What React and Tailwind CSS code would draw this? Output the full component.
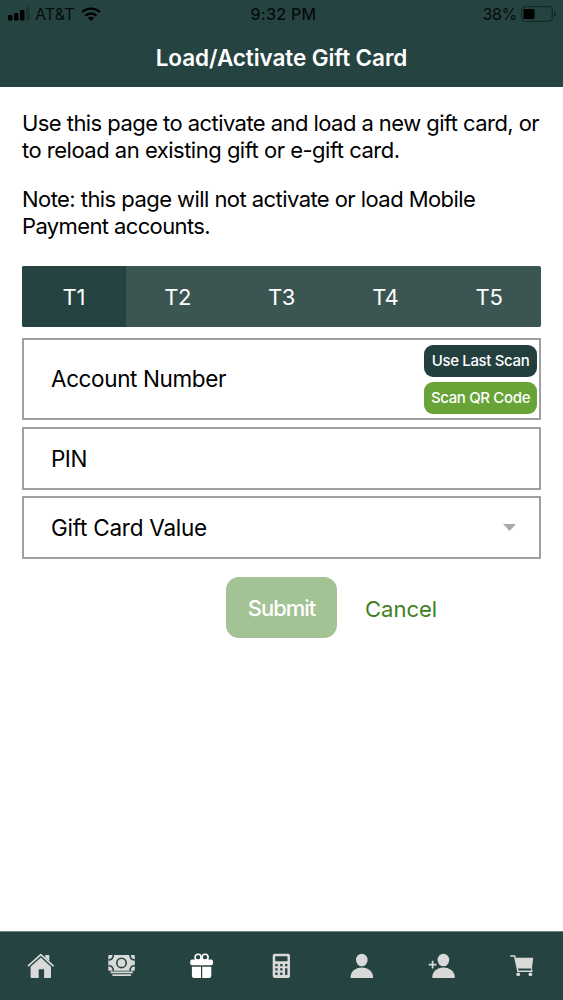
import React, { useState } from 'react';

function HomeIcon() {
  return (
    <svg viewBox="0 0 28 28" className="h-7 w-7" fill="currentColor">
      <path d="M2.5 13.6 14.8 2.6 27 13.6" fill="none" stroke="currentColor" strokeWidth="1.8" strokeLinecap="round" strokeLinejoin="round" />
      <path d="M19.3 2.9h4v6.2l-4-3.6z" />
      <path d="M14.8 5.6 25 14.7V25.2a.8.8 0 0 1-.8.8h-6.1v-8.8h-5.4V26H5.4a.8.8 0 0 1-.8-.8V14.7z" />
    </svg>
  );
}

function CashIcon() {
  return (
    <svg viewBox="0 0 28 28" className="h-7 w-7">
      <rect x="1.3" y="3" width="26.5" height="15.7" rx="1" fill="currentColor" />
      <g fill="none" stroke="#254441" strokeWidth="1.6">
        <circle cx="14.5" cy="10.9" r="4.7" />
        <path d="M1.5 7.8c3 .3 5-1.7 4.7-4.8M23.1 3c-.3 3.1 1.7 5.1 4.7 4.8M1.5 13.8c3-.3 5 1.7 4.7 4.9M23.1 18.7c-.3-3.2 1.7-5.2 4.7-4.9" />
      </g>
      <path d="M3.2 19.6h23l-.5 1.7h-22zM5.1 22.2h19.2l-.5 1.7H5.6z" fill="currentColor" />
    </svg>
  );
}

function GiftIcon() {
  return (
    <svg viewBox="0 0 28 28" className="h-7 w-7" fill="currentColor">
      <g fill="none" stroke="currentColor" strokeWidth="1.6">
        <circle cx="11.1" cy="5.3" r="3" />
        <circle cx="18.1" cy="5.3" r="3" />
      </g>
      <path d="M5 7.6h9v5.7H5A1.8 1.8 0 0 1 3.2 11.5V9.4A1.8 1.8 0 0 1 5 7.6zM15.2 7.6h9A1.8 1.8 0 0 1 26 9.4v2.1a1.8 1.8 0 0 1-1.8 1.8h-9z" />
      <path d="M13.4 5h2.4v8.3h-2.4z" />
      <path d="M4.9 14.7H14V26H7.1a2.2 2.2 0 0 1-2.2-2.2zM15.2 14.7h9.1v9.1a2.2 2.2 0 0 1-2.2 2.2h-6.9z" />
    </svg>
  );
}

function CalculatorIcon() {
  return (
    <svg viewBox="0 0 28 28" className="h-7 w-7">
      <rect x="5.7" y="1.7" width="17.3" height="24.4" rx="2" fill="currentColor" />
      <g fill="#254441">
        <rect x="8.2" y="4.2" width="12.3" height="5" rx=".4" />
        <path d="M8.3 12h2.3v2.3H8.3zM13.2 12h2.3v2.3h-2.3zM18.1 12h2.3v2.3h-2.3zM8.3 16.2h2.3v2.3H8.3zM13.2 16.2h2.3v2.3h-2.3zM8.3 20.6h2.3v2.3H8.3zM13.2 20.6h2.3v2.3h-2.3zM18.1 16.2h2.3v6.7h-2.3z" />
      </g>
    </svg>
  );
}

function UserIcon() {
  return (
    <svg viewBox="0 0 28 28" className="h-7 w-7" fill="currentColor">
      <ellipse cx="13.8" cy="8" rx="5.8" ry="6.3" />
      <path d="M2.6 26v-1.2c0-5 4.7-9.4 11.2-9.4S25 19.8 25 24.8V26z" />
    </svg>
  );
}

function AddUserIcon() {
  return (
    <svg viewBox="0 0 28 28" className="h-7 w-7" fill="currentColor">
      <path d="M.7 12.6h7.8M4.6 8.7v7.8" fill="none" stroke="currentColor" strokeWidth="1.7" />
      <ellipse cx="15.4" cy="8" rx="5.8" ry="6.3" />
      <path d="M4.3 26v-1.2c0-5 4.7-9.4 11.2-9.4s11.2 4.4 11.2 9.4V26z" />
    </svg>
  );
}

function CartIcon() {
  return (
    <svg viewBox="0 0 28 28" className="h-7 w-7" fill="currentColor">
      <path d="M1.3 3.9h4.3l3.3 15.4h14.6" fill="none" stroke="currentColor" strokeWidth="1.5" />
      <path d="M6.2 5.8h18.1l-1.4 10a.8.8 0 0 1-.8.7H8.4z" />
      <path d="M22.6 15v4" fill="none" stroke="currentColor" strokeWidth="1" />
      <circle cx="9.2" cy="22.3" r="1.9" />
      <circle cx="21.4" cy="22.3" r="1.9" />
    </svg>
  );
}

// Bottom bar entries
const navItems = [
  { label: 'Home', Icon: HomeIcon },
  { label: 'Cash', Icon: CashIcon },
  { label: 'Gift cards', Icon: GiftIcon },
  { label: 'Calculator', Icon: CalculatorIcon },
  { label: 'Account', Icon: UserIcon },
  { label: 'Add user', Icon: AddUserIcon },
  { label: 'Cart', Icon: CartIcon },
];

const tabs = ['T1', 'T2', 'T3', 'T4', 'T5'];

function StatusBar() {
  return (
    <div className="grid h-7 grid-cols-3 items-center text-[16px] text-black/85">
      <div className="flex items-center pl-2">
        <svg viewBox="0 0 22 14" className="h-3.5 w-[22px] shrink-0" fill="#000">
          <rect x="0" y="8" width="4.5" height="5.5" rx="1" />
          <rect x="6" y="6" width="4.5" height="7.5" rx="1" />
          <rect x="12" y="3" width="4.5" height="10.5" rx="1" />
          <rect x="18" y="0" width="4" height="13.5" rx="1" fillOpacity=".2" />
        </svg>
        <span className="ml-[5px] tracking-[0.1px]">AT&amp;T</span>
        <svg viewBox="0 0 20 14" className="ml-[6px] h-3.5 w-5" fill="none" stroke="#000" strokeWidth="2.4">
          <path d="M1.2 5.2a12.6 12.6 0 0 1 17.6 0M4.5 8.7a7.9 7.9 0 0 1 11 0" />
          <path d="M7 11a4.2 4.2 0 0 1 6 0l-3 3z" fill="#000" stroke="none" />
        </svg>
      </div>
      <div className="pl-1 text-center font-medium tracking-[0.3px]">9:32 PM</div>
      <div className="flex items-center justify-end pr-[7px]">
        <span className="tracking-[-0.3px]">38%</span>
        <svg viewBox="0 0 35 16" className="ml-1 h-4 w-[35px]">
          <rect x=".7" y=".7" width="30.6" height="14.6" rx="3.6" fill="none" stroke="#000" strokeOpacity=".4" strokeWidth="1.2" />
          <rect x="2.5" y="3" width="11" height="10" rx="1" fill="#000" />
          <path d="M33 5.3c2.4.9 2.4 4.5 0 5.4z" fill="#000" fillOpacity=".45" />
        </svg>
      </div>
    </div>
  );
}

export default function App() {
  const [activeTab, setActiveTab] = useState('T1');

  return (
    <div className="flex h-[1000px] w-[563px] flex-col bg-white font-['Inter','Liberation_Sans',sans-serif] text-black">
      {/* Header */}
      <header className="h-[87px] shrink-0 bg-[#254441]">
        <StatusBar />
        <h1 className="mt-[15px] text-center text-[22.5px] leading-[29px] font-semibold tracking-[-0.08px] text-white">
          Load/Activate Gift Card
        </h1>
      </header>

      <main className="flex-1 px-[22px] pt-[23px]">
        <p className="text-[22px] leading-[27px] tracking-[-0.56px] whitespace-nowrap">
          Use this page to activate and load a new gift card, or
          <br />
          <span className="tracking-[-0.5px]">to reload an existing gift or e-gift card.</span>
        </p>
        <p className="mt-[22px] text-[22px] leading-[27px] tracking-[-0.56px] whitespace-nowrap">
          Note: this page will not activate or load Mobile
          <br />
          <span className="tracking-[-0.62px]">Payment accounts.</span>
        </p>

        {/* Terminal tabs */}
        <div className="mt-[26px] flex h-[61px] overflow-hidden rounded-xs bg-[#3a5552]">
          {tabs.map((tab) => (
            <button
              key={tab}
              onClick={() => setActiveTab(tab)}
              className={`flex-1 pt-0.5 text-[22px] tracking-[-0.3px] text-white ${activeTab === tab ? 'bg-[#254441]' : ''}`}
            >
              {tab}
            </button>
          ))}
        </div>

        {/* Form fields */}
        <div className="mt-[11px] flex h-[82px] items-center justify-between border-2 border-[#a0a0a0] pr-0.5 pl-[27px] text-[22.5px]">
          <span className="tracking-[-0.38px]">Account Number</span>
          <div className="flex w-[113px] flex-col gap-[5px] text-[15px] font-medium tracking-[-0.35px] text-white">
            <button className="h-8 rounded-[9px] bg-[#23403f] pt-0.5">Use Last Scan</button>
            <button className="h-8 rounded-[9px] bg-[#68a338] pt-0.5">Scan QR Code</button>
          </div>
        </div>
        <div className="mt-[7px] flex h-[63px] items-center border-2 border-[#a0a0a0] pl-[27px] text-[22.5px] tracking-[-0.5px]">PIN</div>
        <div className="mt-[6px] flex h-[63px] items-center justify-between border-2 border-[#a0a0a0] pr-[23px] pl-[27px] text-[22.5px]">
          <span className="tracking-[-0.25px]">Gift Card Value</span>
          <svg viewBox="0 0 13 7" className="h-[7px] w-[13px]" fill="#a9a9a9">
            <path d="M0 0h13L6.5 7z" />
          </svg>
        </div>

        {/* Actions */}
        <div className="mt-[18px] flex pl-[204px] text-[22px]">
          <button className="h-[61px] w-[111px] rounded-[13px] bg-[#a3c394] pt-0.5 font-medium tracking-[-1px] text-white">Submit</button>
          <button className="ml-7 pt-1 text-[#3f8021]">Cancel</button>
        </div>
      </main>

      {/* Bottom navigation */}
      <nav className="grid h-[69px] shrink-0 grid-cols-7 border-t border-[#6d827f] bg-[#254441] pt-5">
        {navItems.map(({ label, Icon }) => (
          <a
            key={label}
            aria-label={label}
            className={`flex justify-center ${label === 'Gift cards' ? 'text-white' : 'text-[#d9d9d9]'}`}
          >
            <Icon />
          </a>
        ))}
      </nav>
    </div>
  );
}
